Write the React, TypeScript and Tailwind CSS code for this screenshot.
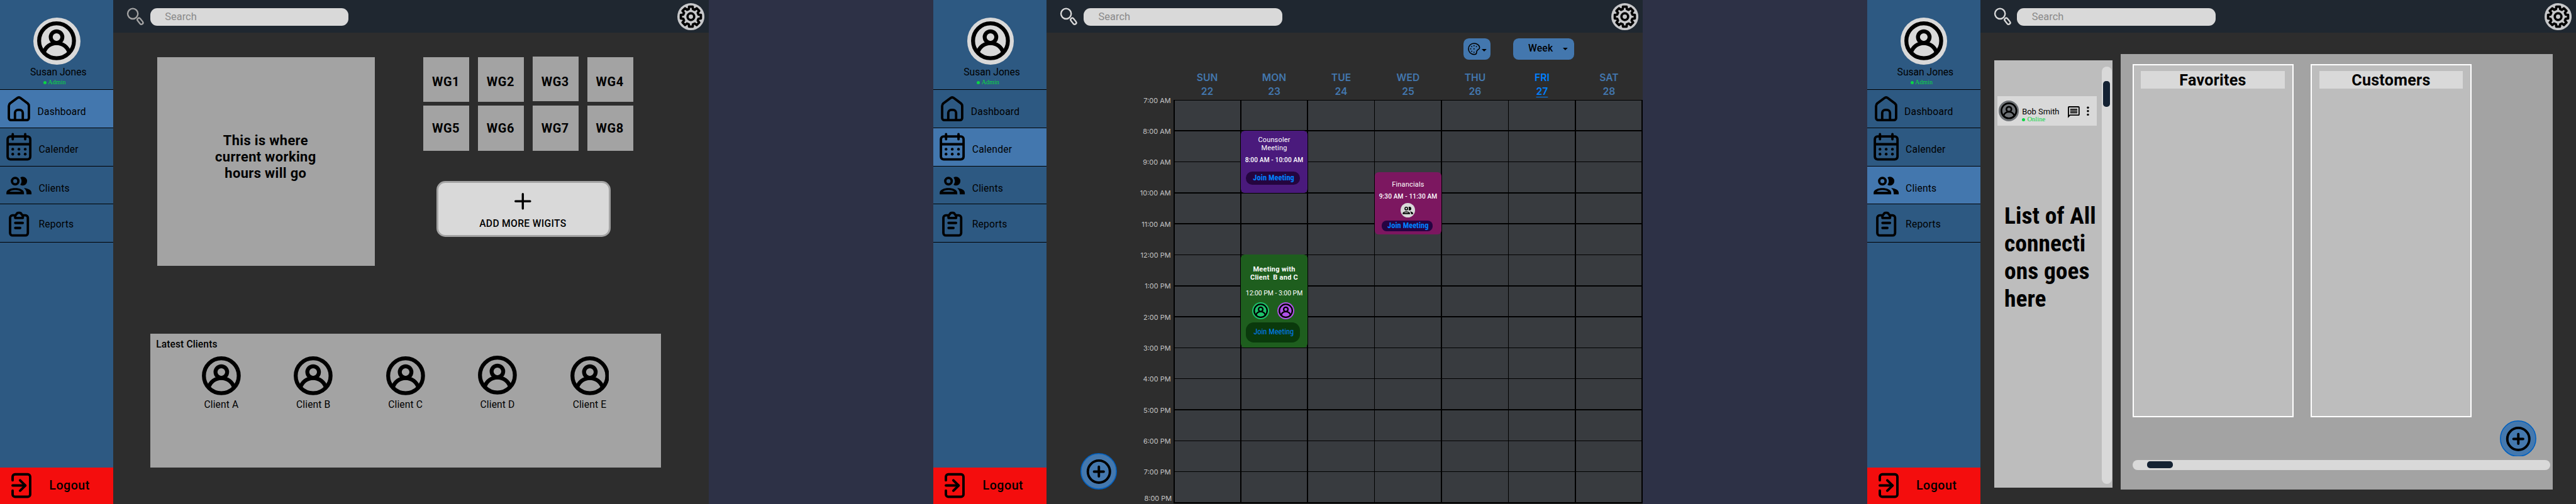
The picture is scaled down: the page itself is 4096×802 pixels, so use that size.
import React from "react";

type Page = "dashboard" | "calender" | "clients";

const ProfileGlyph = ({ className }: { className?: string }) => (
  <svg viewBox="0 0 79 79" className={className} fill="none" stroke="currentColor" strokeWidth="8">
    <circle cx="39.5" cy="39.5" r="35.4" />
    <circle cx="39.5" cy="32" r="11.8" />
    <path d="M13.6 63.75A26.9 26.9 0 0 1 65.4 63.75" />
  </svg>
);

const groupPaths = (
  <g fill="currentColor" stroke="none">
    <path d="M13.07 10.41A5 5 0 0 0 13.07 4.59A3.39 3.39 0 0 1 15 4A3.5 3.5 0 0 1 15 11A3.39 3.39 0 0 1 13.07 10.41Z" />
    <path
      fillRule="evenodd"
      d="M5.5 7.5A3.5 3.5 0 1 1 12.5 7.5A3.5 3.5 0 1 1 5.5 7.5ZM7.4 7.5A1.6 1.6 0 1 0 10.6 7.5A1.6 1.6 0 1 0 7.4 7.5Z"
    />
    <path
      fillRule="evenodd"
      d="M2 18.1V16.8C2 14.3 5.5 13 9 13S16 14.3 16 16.8V18.1ZM4.5 15.9H13.6C12.9 15.2 11.2 14.7 9 14.7S5.2 15.2 4.5 15.9Z"
    />
    <path d="M15.95 13A5.32 5.32 0 0 1 18 17V18.1H22V16.8C22 14.4 19.2 13.3 15.95 13Z" />
  </g>
);

const gearPath = (() => {
  const points: string[] = [];
  for (let i = 0; i < 8; i++) {
    const base = i * 45 - 90;
    const corners: [number, number][] = [
      [-15, 16],
      [-10.5, 20.7],
      [10.5, 20.7],
      [15, 16],
    ];
    corners.forEach(([angle, radius]) => {
      const a = ((base + angle) * Math.PI) / 180;
      points.push(`${(27.5 + radius * Math.cos(a)).toFixed(2)} ${(27.5 + radius * Math.sin(a)).toFixed(2)}`);
    });
  }
  return `M${points.join("L")}Z`;
})();

const Gear = () => (
  <svg viewBox="0 0 55 55" className="h-[55px] w-[55px]" fill="none" stroke="black" strokeWidth="4.8" strokeLinejoin="round">
    <circle cx="27.5" cy="27.5" r="27.5" fill="#c7c8ca" stroke="none" />
    <path d={gearPath} />
    <circle cx="27.5" cy="27.5" r="6.8" />
  </svg>
);

const HomeIcon = () => (
  <g>
    <path d="M22.2 244.5H54.5A4.2 4.2 0 0 0 58.7 240.3V215.8C58.7 213.6 57.8 211.9 56.2 210.5L42.2 199.9C40 198.2 36.8 198.2 34.6 199.9L20.4 210.5C18.9 211.8 18 213.6 18 215.8V240.3A4.2 4.2 0 0 0 22.2 244.5Z" />
    <path d="M30.4 244V230A6.3 6.3 0 0 1 36.7 223.7H40A6.3 6.3 0 0 1 46.3 230V244" />
  </g>
);

const CalendarIcon = () => (
  <g>
    <rect x="15.5" y="276.8" width="46" height="46.5" rx="5.5" />
    <path d="M15.5 292.6H61.5" />
    <path d="M25.9 272V282.5M51.2 272V282.5" strokeLinecap="round" />
    <g fill="currentColor" stroke="none">
      <circle cx="25.9" cy="302.7" r="2.8" />
      <circle cx="38.5" cy="302.7" r="2.8" />
      <circle cx="51.2" cy="302.7" r="2.8" />
      <circle cx="25.9" cy="312.7" r="2.8" />
      <circle cx="38.5" cy="312.7" r="2.8" />
      <circle cx="51.2" cy="312.7" r="2.8" />
    </g>
  </g>
);

const ClientsIcon = () => <g transform="translate(7.9 349.5) scale(2.55)">{groupPaths}</g>;

const ReportsIcon = () => (
  <g>
    <path d="M30 437.5H25.5A5 5 0 0 0 20.5 442.5V473.5A5 5 0 0 0 25.5 478.5H51.6A5 5 0 0 0 56.6 473.5V442.5A5 5 0 0 0 51.6 437.5H47" />
    <path
      d="M30.9 442.9V439.5C30.9 437.5 31.8 436.3 33.4 435.4C34.3 433.4 35.6 432.4 37.4 432.4H39.8C41.6 432.4 42.9 433.4 43.8 435.4C45.4 436.3 46.3 437.5 46.3 439.5V442.9Z"
      strokeLinejoin="round"
    />
    <path d="M31 453H46.2M31 463.2H41" strokeLinecap="round" />
  </g>
);

const navItems: {
  id: string;
  label: string;
  box: string;
  svg: string;
  viewBox: string;
  text: string;
  icon: React.ReactNode;
}[] = [
  { id: "dashboard", label: "Dashboard", box: "h-[78px] border-y", svg: "h-[76px]", viewBox: "0 183 75 76", text: "mt-[32px] ml-[1px]", icon: <HomeIcon /> },
  { id: "calender", label: "Calender", box: "h-[79px] border-b", svg: "h-[78px]", viewBox: "0 260 75 78", text: "mt-[33px] ml-[3.5px]", icon: <CalendarIcon /> },
  { id: "clients", label: "Clients", box: "h-[76px] border-b", svg: "h-[75px]", viewBox: "0 339 75 75", text: "mt-[32.5px] ml-[3.5px]", icon: <ClientsIcon /> },
  { id: "reports", label: "Reports", box: "h-[78px] border-b", svg: "h-[77px]", viewBox: "0 415 75 77", text: "mt-[29.5px] ml-[3.5px]", icon: <ReportsIcon /> },
];

const Sidebar = ({ page }: { page: Page }) => (
  <aside className="flex h-full w-[230px] shrink-0 flex-col bg-[#2d5982]">
    <div className="flex h-[182px] flex-col pt-[36px]">
      <div className="ml-[68px] flex h-[95px] w-[95px] items-center justify-center rounded-full bg-[#d9d9d9]">
        <ProfileGlyph className="h-[79px] w-[79px]" />
      </div>
      <div className="mt-[5px] pl-[7px] text-center text-[20px] leading-[24px]">Susan Jones</div>
      <div className="ml-[88px] flex items-center gap-[3px] text-[#0bd644]">
        <span className="h-[6.5px] w-[6.5px] rounded-full bg-[#0bd644]" />
        <span className="font-['Liberation_Serif'] text-[13px] leading-[16px]">Admin</span>
      </div>
    </div>
    <nav className="flex flex-col">
      {navItems.map((item) => (
        <div key={item.id} className={`flex border-black ${item.box} ${item.id === page ? "bg-[#4377ae]" : ""}`}>
          <svg viewBox={item.viewBox} className={`w-[75px] shrink-0 ${item.svg}`} fill="none" stroke="currentColor" strokeWidth="4.9">
            {item.icon}
          </svg>
          <span className={`text-[20px] leading-[24px] tracking-[0.25px] ${item.text}`}>{item.label}</span>
        </div>
      ))}
    </nav>
    <div className="mt-auto flex h-[75px] bg-[#f40d0d]">
      <svg viewBox="0 950 99 75" className="h-[75px] w-[99px] shrink-0" fill="none" stroke="currentColor" strokeWidth="5" strokeLinecap="round">
        <path d="M25.6 976V968.7A5 5 0 0 1 30.6 963.7H56.3A5 5 0 0 1 61.3 968.7V1004.5A5 5 0 0 1 56.3 1009.5H30.6A5 5 0 0 1 25.6 1004.5V997" />
        <path d="M25.6 986.5H51" />
        <path d="M40.8 976L51.5 986.5L40.8 997" strokeLinejoin="round" />
      </svg>
      <span className="mt-[22.5px] ml-[1px] text-[25px] leading-[30px] font-medium tracking-[0.7px]">Logout</span>
    </div>
  </aside>
);

const TopBar = ({ dim }: { dim?: boolean }) => (
  <header className="flex h-[67px] shrink-0 bg-[#1f2730]">
    <svg
      viewBox="0 0 75 67"
      className={`h-[67px] w-[75px] shrink-0 ${dim ? "text-[#a3a3a3]" : "text-[#d9d9d9]"}`}
      fill="none"
      stroke="currentColor"
      strokeWidth="3"
    >
      <circle cx="39.8" cy="27.9" r="10.4" />
      <rect x="47.6" y="39.7" width="14.4" height="6.8" rx="3.4" transform="rotate(51 54.8 43.1)" />
    </svg>
    <div className="mt-[16px] h-[36px] w-[403px] rounded-[14px] bg-[#d9d9d9] pl-[30px] text-[21px] leading-[35px] text-[#8a8a8a]">Search</div>
    <div className="mt-[7px] mr-[9px] ml-auto">
      <Gear />
    </div>
  </header>
);

const Frame = ({ page, children }: { page: Page; children: React.ReactNode }) => (
  <section className="relative flex h-full w-[1440px] shrink-0 bg-[#2d2d2d]">
    <Sidebar page={page} />
    <div className="flex h-full w-[1210px] flex-col">
      <TopBar dim={page === "dashboard"} />
      {children}
    </div>
  </section>
);

const AddFab = ({ className }: { className: string }) => (
  <button className={`absolute h-[74px] w-[74px] ${className}`}>
    <svg viewBox="0 0 74 74" className="h-full w-full" fill="none" stroke="black" strokeWidth="5" strokeLinecap="round">
      <circle cx="37" cy="37" r="36" fill="#4478ae" stroke="#0060c0" strokeWidth="2" />
      <circle cx="37.4" cy="37.6" r="22.4" />
      <path d="M37.4 27.8V47.4M27.6 37.6H47.2" />
    </svg>
  </button>
);

const Dashboard = () => (
  <Frame page="dashboard">
    <div className="flex">
      <div className="mt-[49px] ml-[89px] flex h-[424px] w-[442px] justify-center bg-[#a3a3a3] pt-[154px] pr-px">
        <p className="text-center text-[28px] leading-[32.8px] font-bold tracking-[0.45px]">
          This is where
          <br />
          current working
          <br />
          hours will go
        </p>
      </div>
      <div className="ml-[99px]">
        <div className="mt-[49px] grid grid-cols-[repeat(4,93px)] gap-x-[18px] gap-y-[8px]">
          {["WG1", "WG2", "WG3", "WG4"].map((w) => (
            <div
              key={w}
              className={`h-[91px] bg-[#a3a3a3] pl-[17.5px] ${w === "WG3" ? "-mt-px mb-px pt-[38px]" : "pt-[37px]"} text-[25.5px] leading-[28px] font-bold tracking-[0.7px]`}
            >
              {w}
            </div>
          ))}
          {["WG5", "WG6", "WG7", "WG8"].map((w) => (
            <div key={w} className="h-[91px] bg-[#a3a3a3] pt-[33px] pl-[17.5px] text-[25.5px] leading-[28px] font-bold tracking-[0.7px]">
              {w}
            </div>
          ))}
        </div>
        <button className="mt-[62px] ml-[26px] flex h-[114px] w-[354px] flex-col items-center rounded-[18px] border-[4px] border-[#a3a3a3] bg-[#d9d9d9] pt-[21px]">
          <svg viewBox="0 0 34 34" className="mr-[2px] h-[34px] w-[34px] shrink-0" stroke="black" strokeWidth="4.4" strokeLinecap="round">
            <path d="M17 2.2V31.8M2.2 17H31.8" />
          </svg>
          <span className="mt-[16px] mr-[2px] text-[20px] leading-[24px] font-medium tracking-[0.4px]">ADD MORE WIGITS</span>
        </button>
      </div>
    </div>
    <div className="mt-[138px] ml-[75px] h-[272px] w-[1037px] bg-[#a3a3a3] pt-[10px]">
      <div className="ml-[12px] text-[20px] leading-[24px] font-medium tracking-[0.12px]">Latest Clients</div>
      <div className="mt-[12px] ml-[51px] flex">
        {["A", "B", "C", "D", "E"].map((c) => (
          <div key={c} className="flex w-[187px] flex-col items-center">
            <ProfileGlyph className={`h-[79px] w-[79px] ${c === "D" ? "-mt-px mb-px" : ""}`} />
            <span className="mt-[8px] text-[20px] leading-[24px] tracking-[0.15px]">Client {c}</span>
          </div>
        ))}
      </div>
    </div>
  </Frame>
);

const days: [string, string][] = [
  ["SUN", "22"],
  ["MON", "23"],
  ["TUE", "24"],
  ["WED", "25"],
  ["THU", "26"],
  ["FRI", "27"],
  ["SAT", "28"],
];

const hours = [
  "7:00 AM",
  "8:00 AM",
  "9:00 AM",
  "10:00 AM",
  "11:00 AM",
  "12:00 PM",
  "1:00 PM",
  "2:00 PM",
  "3:00 PM",
  "4:00 PM",
  "5:00 PM",
  "6:00 PM",
  "7:00 PM",
];

const Caret = ({ className }: { className?: string }) => (
  <svg viewBox="0 0 10 5" className={`h-[5px] w-[10px] ${className ?? ""}`}>
    <path d="M0 0H10L5 5Z" />
  </svg>
);

const Calender = () => (
  <Frame page="calender">
    <div className="flex pt-[11px]">
      <button className="ml-[847px] flex h-[43px] w-[54px] items-center rounded-[11px] bg-[#4377ae] pl-[9px]">
        <svg viewBox="0 0 25 25" className="h-[25px] w-[25px]" fill="none" stroke="black" strokeWidth="2">
          <path d="M12.5 1.2C19 1.2 23.9 6 23.9 9.8C23.9 12.5 21.5 13.6 19.6 15C17.6 16.5 17.8 18.4 17.6 20.6C17.4 23 15.5 23.8 12.5 23.8A11.3 11.3 0 0 1 12.5 1.2Z" />
          <g fill="black" stroke="none">
            <circle cx="12.5" cy="6" r="1.2" />
            <circle cx="7.8" cy="7.8" r="1.2" />
            <circle cx="17.3" cy="7.8" r="1.2" />
            <circle cx="5.8" cy="12.5" r="1.2" />
            <circle cx="12.5" cy="12.5" r="1.2" />
            <circle cx="7.8" cy="17.4" r="1.2" />
            <circle cx="12.5" cy="19.3" r="1.2" />
          </g>
        </svg>
        <Caret className="mt-[5px] ml-[3px]" />
      </button>
      <button className="ml-[47px] flex h-[43px] w-[123px] items-center rounded-[11px] bg-[#4377ae] pl-[30px]">
        <span className="w-[70px] text-left text-[20px] leading-[24px] font-medium tracking-[0.3px]">Week</span>
        <Caret />
      </button>
    </div>
    <div className="mt-[23px] ml-[258px] grid grid-cols-[repeat(7,136px)] text-center font-[Inter] text-[20px] leading-[28px] font-semibold text-[#4377ae]">
      {days.map(([name, date]) => (
        <div key={name} className={name === "FRI" ? "text-[#0080ff]" : ""}>
          <div>{name}</div>
          <div className={name === "FRI" ? "underline decoration-[1.5px] underline-offset-[4px]" : ""}>{date}</div>
        </div>
      ))}
    </div>
    <div className="mt-[3px] flex">
      <div className="-mt-[6px] flex w-[258px] flex-col pr-[6px] text-right font-[Inter] text-[14px] leading-[16px] text-[#c4c4c4]">
        {hours.map((h, i) => (
          <div key={h} className={i === 0 ? "h-[62px]" : i === 12 ? "h-[54px]" : "h-[63px]"}>
            {h}
          </div>
        ))}
        <div className="-mr-[2px] h-[16px]">8:00 PM</div>
      </div>
      <div className="relative grid h-[820px] w-[952px] grid-cols-[133px_repeat(5,134px)_133px] grid-rows-[60px_repeat(12,61px)] gap-[2px] bg-black p-[2px]">
        {Array.from({ length: 91 }, (_, i) => (
          <div key={i} className="bg-[#383b3f]" />
        ))}
        <div className="absolute top-[63px] left-[136px] flex h-[126px] w-[136px] flex-col items-center rounded-[8px] bg-[#4a1a7c] pt-[11.5px] text-white">
          <span className="text-center text-[14px] leading-[16.4px] tracking-[0.25px]">
            Counsoler
            <br />
            Meeting
          </span>
          <span className="mt-[8px] text-[13px] leading-[16px] font-medium tracking-[0.15px]">8:00 AM - 10:00 AM</span>
          <span className="mt-[14.7px] mr-[5px] h-[27px] w-[109px] rounded-[13px] bg-[#24053f] pl-[14px] text-[16px] leading-[25px] font-bold text-[#0080ff] font-['Roboto_Condensed',Roboto] [font-stretch:75%]">
            Join Meeting
          </span>
        </div>
        <div className="absolute top-[147px] left-[408px] flex h-[126px] w-[136px] flex-col items-center rounded-[8px] bg-[#7c1760] pt-[17.8px] text-white">
          <span className="text-[14px] leading-[16.4px] tracking-[0.25px]">Financials</span>
          <span className="mt-[8.6px] text-[13px] leading-[16px] font-medium tracking-[0.15px]">9:30 AM - 11:30 AM</span>
          <span className="mt-[4px] mr-[1px] flex h-[29.5px] w-[29.5px] items-center justify-center rounded-full bg-[#d9d9d9] text-black">
            <svg viewBox="2 4 20 14.1" className="h-[15px] w-[22px]">
              {groupPaths}
            </svg>
          </span>
          <span className="mt-[6.7px] mr-[4px] h-[21px] w-[104px] rounded-[10px] bg-[#250341] pl-[12px] text-[16px] leading-[20px] font-bold text-[#0080ff] font-['Roboto_Condensed',Roboto] [font-stretch:75%]">
            Join Meeting
          </span>
        </div>
        <div className="absolute top-[315px] left-[136px] flex h-[189px] w-[136px] flex-col items-center rounded-[8px] bg-[#1e5e1e] pt-[23px] text-white">
          <span className="text-center text-[14px] leading-[16.4px] font-bold tracking-[0.35px] whitespace-pre">{"Meeting with\nClient  B and C"}</span>
          <span className="mt-[15px] text-[13.3px] leading-[16px]">12:00 PM - 3:00 PM</span>
          <span className="mt-[9.2px] mr-[4px] flex gap-[16px] text-black">
            <span className="flex h-[35px] w-[35px] items-center justify-center rounded-full bg-[#1dc36c]">
              <ProfileGlyph className="h-[29.5px] w-[29.5px]" />
            </span>
            <span className="flex h-[35px] w-[35px] items-center justify-center rounded-full bg-[#af52e8]">
              <ProfileGlyph className="h-[29.5px] w-[29.5px]" />
            </span>
          </span>
          <span className="mt-[7px] mr-[5px] h-[40px] w-[109px] rounded-[16px] bg-[#0a390c] pl-[15px] text-[16px] leading-[38px] text-[#0080ff] font-['Roboto_Condensed',Roboto] [font-stretch:75%]">
            Join Meeting
          </span>
        </div>
      </div>
    </div>
    <AddFab className="top-[921px] left-[298.5px]" />
  </Frame>
);

const Clients = () => (
  <Frame page="clients">
    <div className="flex">
      <div className="mt-[56px] ml-[28px] flex h-[868px] w-[241px] bg-[#bdbdbd]">
        <div className="w-[219px] pt-[73px] pl-[7px]">
          <div className="flex h-[59px] w-[202px] bg-[#d9d9d9]">
            <div className="mt-[9px] ml-[3px] flex h-[41px] w-[41px] items-center justify-center rounded-full bg-[#6d7175]">
              <ProfileGlyph className="h-[34px] w-[34px]" />
            </div>
            <div className="mt-[21px] ml-[6px] w-[80px]">
              <div className="text-[16.5px] leading-[20px]">Bob Smith</div>
              <div className="-mt-[2px] flex items-center gap-[4px] text-[#0bd644]">
                <span className="h-[6.5px] w-[6.5px] rounded-full bg-[#0bd644]" />
                <span className="font-['Liberation_Serif'] text-[13.5px] leading-[16px]">Online</span>
              </div>
            </div>
            <svg viewBox="2 2 20 20" className="mt-[20px] ml-[13px] h-[24px] w-[24px] shrink-0">
              <path d="M20 2H4c-1.1 0-1.99.9-1.99 2L2 22l4-4h14c1.1 0 2-.9 2-2V4c0-1.1-.9-2-2-2zm0 14H5.17L4 17.17V4h16v12z" />
              <path d="M6 6.2H18V8.1H6ZM6 9.2H18V11.1H6ZM6 12.2H18V14.1H6Z" />
            </svg>
            <svg viewBox="0 0 5 20" className="mt-[20px] ml-[14px] h-[20px] w-[5px] shrink-0">
              <circle cx="2.5" cy="2.9" r="2.2" />
              <circle cx="2.5" cy="10" r="2.2" />
              <circle cx="2.5" cy="17.1" r="2.2" />
            </svg>
          </div>
          <p className="mt-[156.5px] ml-[14px] text-[48px] leading-[56px] font-bold whitespace-pre font-['Roboto_Condensed',Roboto] [font-stretch:75%]">
            {"List of All\nconnecti\nons goes\nhere"}
          </p>
        </div>
        <div className="mt-[12px] flex h-[849px] w-[20px] justify-center rounded-full bg-[#d9d9d9] pt-[30px]">
          <div className="h-[52px] w-[14px] rounded-[6px] bg-[#142233]" />
        </div>
      </div>
      <div className="mt-[43px] ml-[16px] h-[885px] w-[878px] bg-[#a3a3a3] pt-[20px] pl-[24px]">
        <div className="flex gap-[35px]">
          {["Favorites", "Customers"].map((t) => (
            <div key={t} className="flex h-[718px] w-[327px] justify-center border-[3px] border-white bg-[#bdbdbd] pt-[12px]">
              <div className="h-[35px] w-[292px] bg-[#d9d9d9] text-center text-[32px] leading-[38px] font-bold tracking-[0.35px]">{t}</div>
            </div>
          ))}
        </div>
        <div className="mt-[87px] flex h-[20px] w-[849px] items-center rounded-full bg-[#d9d9d9] pl-[30px]">
          <div className="h-[14px] w-[52px] rounded-[6px] bg-[#142233]" />
        </div>
      </div>
    </div>
    <AddFab className="top-[854px] left-[1286px]" />
  </Frame>
);

export default function App() {
  return (
    <div className="h-[802px] w-[4096px] overflow-hidden bg-[#2d3146]">
      <main className="flex h-[1025px] w-[5232px] gap-[456px] font-[Roboto,sans-serif] text-black [zoom:0.78287]">
        <Dashboard />
        <Calender />
        <Clients />
      </main>
    </div>
  );
}
